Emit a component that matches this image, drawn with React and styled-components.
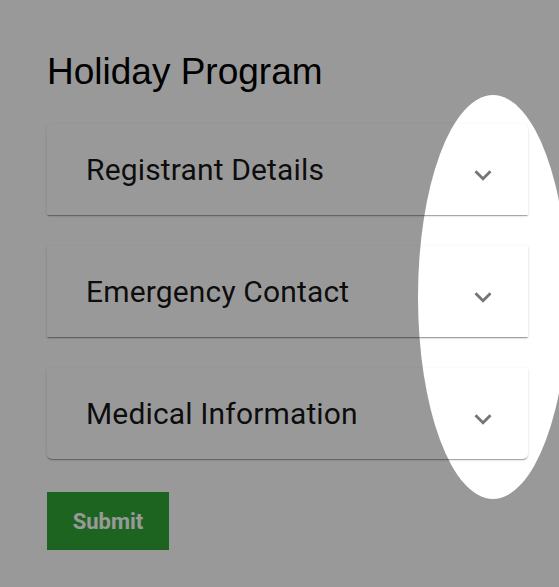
import React from 'react'
import styled, { createGlobalStyle } from 'styled-components'

const GlobalStyle = createGlobalStyle`
  html, body {
    margin: 0;
    padding: 0;
    background: #fff;
  }
  body {
    font-family: Roboto, "Liberation Sans", sans-serif;
  }
`

const SECTIONS = ['Registrant Details', 'Emergency Contact', 'Medical Information']

const App = () => {
  return (
    <>
      <GlobalStyle />
      <Page>
        <Title>Holiday Program</Title>
        <AccordionList>
          {SECTIONS.map((label) => (
            <AccordionCard key={label}>
              <Summary>
                <Label>{label}</Label>
                <ExpandIcon viewBox="0 0 24 24">
                  <path d="M16.59 8.59 12 13.17 7.41 8.59 6 10l6 6 6-6z" />
                </ExpandIcon>
              </Summary>
            </AccordionCard>
          ))}
        </AccordionList>
        <SubmitButton type="button">Submit</SubmitButton>
      </Page>
      {/* spotlight tour backdrop */}
      <Backdrop>
        <Spotlight />
      </Backdrop>
    </>
  )
}
export default App

const Page = styled.main`
  padding: 50px 31px 40px 47px;
  display: flex;
  flex-direction: column;
  align-items: flex-start;
`

const Title = styled.h1`
  margin: 0;
  font-family: 'Liberation Sans', Arial, sans-serif;
  font-weight: 400;
  font-size: 37px;
  line-height: 44px;
  color: #000;
`

const AccordionList = styled.div`
  margin-top: 30px;
  width: 481px;
  display: flex;
  flex-direction: column;
  gap: 31px;
`

const AccordionCard = styled.section`
  background: #fff;
  color: rgba(0, 0, 0, 0.92);
  box-shadow: 0px 2px 1px -1px rgba(0, 0, 0, 0.2),
    0px 1px 1px 0px rgba(0, 0, 0, 0.14), 0px 1px 3px 0px rgba(0, 0, 0, 0.12);

  &:first-child {
    border-top-left-radius: 5px;
    border-top-right-radius: 5px;
  }
  &:last-child {
    border-bottom-left-radius: 5px;
    border-bottom-right-radius: 5px;
  }
`

const Summary = styled.div`
  height: 91px;
  display: flex;
  align-items: center;
  justify-content: space-between;
  padding: 0 28px 0 39px;
  box-sizing: border-box;
  cursor: pointer;
`

const Label = styled.span`
  font-family: Roboto, sans-serif;
  font-size: 30px;
  letter-spacing: 0.15px;
`

const ExpandIcon = styled.svg`
  width: 34px;
  height: 34px;
  margin-top: 10px;
  fill: rgba(0, 0, 0, 0.54);
`

const SubmitButton = styled.button`
  margin-top: 33px;
  width: 122px;
  height: 58px;
  border: none;
  border-radius: 0;
  background: #32a738;
  color: #fff;
  font-family: Roboto, sans-serif;
  font-weight: 700;
  font-size: 22px;
  padding: 0;
  cursor: pointer;
`

const Backdrop = styled.div`
  position: fixed;
  inset: 0;
  overflow: hidden;
  pointer-events: none;
`

const Spotlight = styled.div`
  position: absolute;
  left: 418px;
  top: 95px;
  width: 150px;
  height: 404px;
  border-radius: 50%;
  box-shadow: 0 0 0 2000px rgba(0, 0, 0, 0.4);
`
